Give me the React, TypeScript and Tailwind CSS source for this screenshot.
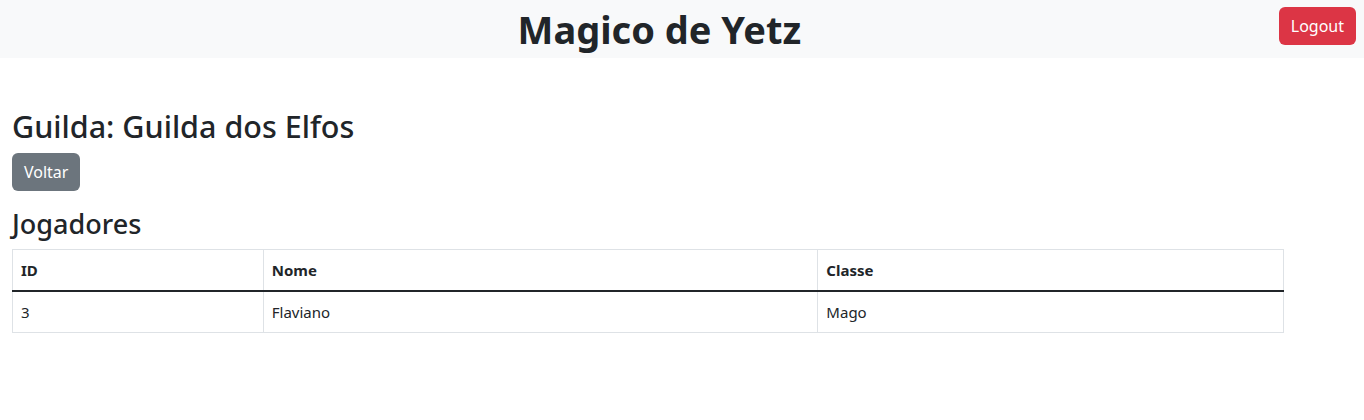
const jogadores = [{ id: 3, nome: "Flaviano", classe: "Mago" }]

export default function App() {
  return (
    <div className="min-h-[420px] bg-white text-[#212529] font-['Noto_Sans',sans-serif]">
      {/* Cabeçalho */}
      <header className="flex h-[58px] items-center bg-[#f8f9fa]">
        <h1 className="flex-1 pl-[40px] text-center text-[38px] font-bold leading-[48px]">Magico de Yetz</h1>
        <button className="mr-2 mb-[6px] h-[38px] rounded-[6px] bg-[#dc3545] px-3 text-[16px] leading-6 text-white">
          Logout
        </button>
      </header>

      <main className="px-3 pt-[49px]">
        <h2 className="mb-2 text-[30.5px] font-medium leading-[38px]">Guilda: Guilda dos Elfos</h2>
        <button className="h-[38px] rounded-[6px] bg-[#6c757d] px-3 text-[16px] leading-6 text-white">Voltar</button>

        <h3 className="mt-4 mb-2 text-[27px] font-medium leading-[34px]">Jogadores</h3>
        <table className="w-[1272px] border-collapse text-[15px]">
          <colgroup>
            <col className="w-[251px]" />
            <col className="w-[555px]" />
            <col className="w-[466px]" />
          </colgroup>
          <thead>
            <tr>
              <th className="h-[41px] border border-[#dee2e6] border-b-2 border-b-[#212529] px-2 text-left font-bold">ID</th>
              <th className="border border-[#dee2e6] border-b-2 border-b-[#212529] px-2 text-left font-bold">Nome</th>
              <th className="border border-[#dee2e6] border-b-2 border-b-[#212529] px-2 text-left font-bold">Classe</th>
            </tr>
          </thead>
          <tbody>
            {jogadores.map((j) => (
              <tr key={j.id}>
                <td className="h-[42px] border border-[#dee2e6] px-2">{j.id}</td>
                <td className="border border-[#dee2e6] px-2">{j.nome}</td>
                <td className="border border-[#dee2e6] px-2">{j.classe}</td>
              </tr>
            ))}
          </tbody>
        </table>
      </main>
    </div>
  )
}
